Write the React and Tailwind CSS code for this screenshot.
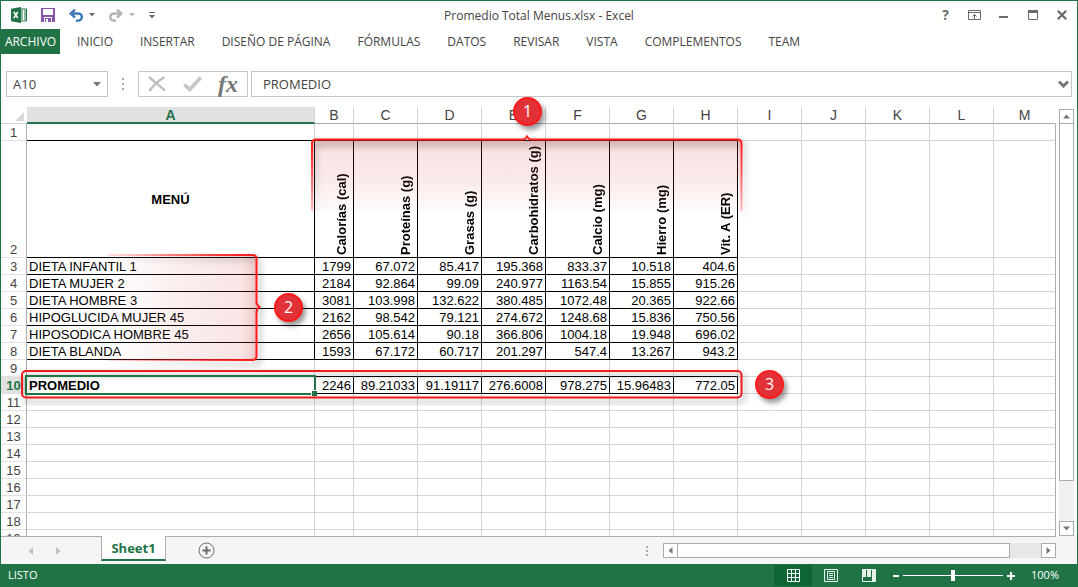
import { useState } from "react";
import clsx from "clsx";

const TABS = [
  "INICIO",
  "INSERTAR",
  "DISEÑO DE PÁGINA",
  "FÓRMULAS",
  "DATOS",
  "REVISAR",
  "VISTA",
  "COMPLEMENTOS",
  "TEAM",
];

const COLUMNS = ["A", "B", "C", "D", "E", "F", "G", "H", "I", "J", "K", "L", "M"];

const HEADINGS = [
  "Calorías (cal)",
  "Proteínas (g)",
  "Grasas (g)",
  "Carbohidratos (g)",
  "Calcio (mg)",
  "Hierro (mg)",
  "Vit. A (ER)",
];

const CELLS = {
  2: ["MENÚ", ...HEADINGS],
  3: ["DIETA INFANTIL 1", "1799", "67.072", "85.417", "195.368", "833.37", "10.518", "404.6"],
  4: ["DIETA MUJER 2", "2184", "92.864", "99.09", "240.977", "1163.54", "15.855", "915.26"],
  5: ["DIETA HOMBRE 3", "3081", "103.998", "132.622", "380.485", "1072.48", "20.365", "922.66"],
  6: ["HIPOGLUCIDA MUJER 45", "2162", "98.542", "79.121", "274.672", "1248.68", "15.836", "750.56"],
  7: ["HIPOSODICA HOMBRE 45", "2656", "105.614", "90.18", "366.806", "1004.18", "19.948", "696.02"],
  8: ["DIETA BLANDA", "1593", "67.172", "60.717", "201.297", "547.4", "13.267", "943.2"],
  10: ["PROMEDIO", "2246", "89.21033", "91.19117", "276.6008", "978.275", "15.96483", "772.05"],
};

const ROWS = Array.from({ length: 19 }, (_, i) => i + 1);

function Caret({ className }) {
  return (
    <svg width="6" height="4" viewBox="0 0 6 4" className={className} fill="currentColor">
      <path d="M0 0h6L3 3.5z" />
    </svg>
  );
}

function ExcelLogo() {
  return (
    <svg width="16" height="16" viewBox="0 0 16 16" className="shrink-0">
      <path d="M9 2h6.5v12H9z" fill="#fff" stroke="#217346" />
      <path d="M10 4h2M13 4h2M10 6h2M13 6h2M10 8h2M13 8h2M10 10h2M13 10h2M10 12h2M13 12h2" stroke="#217346" />
      <path d="M0 1.8L10 0v16L0 14.2z" fill="#217346" />
      <path d="M2.8 4.8l4 6.4M6.8 4.8l-4 6.4" stroke="#fff" strokeWidth="1.6" />
    </svg>
  );
}

function TitleBar() {
  return (
    <header className="grid h-7 grid-cols-[1fr_auto_1fr] items-center text-[#6a6a6a]">
      <div className="flex items-center gap-[14px] pl-[10px]">
        <ExcelLogo />
        <button aria-label="Guardar">
          <svg width="14" height="14" viewBox="0 0 14 14">
            <path d="M0 0h14v14H0z" fill="#8756ab" />
            <path d="M2 1h10v6H2zM3 9h8v5H3z" fill="#fff" />
            <path d="M4 10h6v4H4z" fill="#8756ab" />
            <path d="M5 11h2v3H5z" fill="#fff" />
          </svg>
        </button>
        <button aria-label="Deshacer" className="flex items-center gap-[6px]">
          <svg width="14" height="13" viewBox="0 0 14 13" fill="none" stroke="#3f78b5" strokeWidth="2.4">
            <path d="M1.5 4.5H8.500c3 0 4.300 1.500 4.300 3.500 0 2.500-2 3.800-5.800 3.800" />
            <path d="M6 0.500l-4.300 4 4.300 4" />
          </svg>
          <Caret />
        </button>
        <button aria-label="Rehacer" className="flex items-center gap-[6px] text-[#b8b8b8]">
          <svg width="14" height="13" viewBox="0 0 14 13" fill="none" stroke="#b4b4b4" strokeWidth="2.4">
            <path d="M12.500 4.500H5.500C2.500 4.500 1.200 6 1.200 8c0 2.500 2 3.800 5.800 3.800" />
            <path d="M8 0.500l4.300 4-4.300 4" />
          </svg>
          <Caret />
        </button>
        <button aria-label="Personalizar barra de acceso rápido">
          <svg width="6" height="7" viewBox="0 0 6 7" fill="#6a6a6a">
            <path d="M0 0h6v1H0zM0 3h6L3 6.500z" />
          </svg>
        </button>
      </div>
      <h1 className="pt-[2px] text-xs text-[#444]">Promedio Total Menus.xlsx - Excel</h1>
      <div className="flex justify-end pr-px [&>button]:flex [&>button]:h-7 [&>button]:w-[29px] [&>button]:items-center [&>button]:justify-center">
        <button aria-label="Ayuda" className="text-sm font-bold">
          ?
        </button>
        <button aria-label="Opciones de la cinta">
          <svg width="13" height="10" viewBox="0 0 13 10" fill="none" stroke="currentColor">
            <path d="M0.500 0.500h12v9H0.500zM1 2.500h11M6.500 9V4.500M4.500 6.500l2-2 2 2" />
          </svg>
        </button>
        <button aria-label="Minimizar">
          <svg width="9" height="10" viewBox="0 0 9 10" fill="currentColor">
            <path d="M0 6h9v2H0z" />
          </svg>
        </button>
        <button aria-label="Maximizar">
          <svg width="10" height="10" viewBox="0 0 10 10" fill="none" stroke="currentColor">
            <path d="M0.500 0.500h9v9h-9z" />
            <path d="M0 1.500h10" strokeWidth="3" />
          </svg>
        </button>
        <button aria-label="Cerrar">
          <svg width="10" height="10" viewBox="0 0 10 10" stroke="currentColor" strokeWidth="2.200">
            <path d="M0.800 0.800l8.400 8.400M9.200 0.800L0.800 9.200" />
          </svg>
        </button>
      </div>
    </header>
  );
}

function RibbonTabs() {
  return (
    <nav className="flex h-[25px] items-center gap-[27px] text-xs whitespace-nowrap text-[#444]">
      <button className="-mr-[10px] h-full w-[59px] shrink-0 bg-[#217346] text-center text-white">ARCHIVO</button>
      {TABS.map((tab) => (
        <button key={tab}>{tab}</button>
      ))}
    </nav>
  );
}

function FormulaBar({ value, onChange }) {
  return (
    <div className="mt-[17px] flex h-[26px] items-stretch pr-[5px] pl-[5px] text-[13px] text-[#444]">
      <div className="flex w-[102px] items-center border border-[#c6c6c6] pr-[6px]">
        <input aria-label="Cuadro de nombres" defaultValue="A10" className="w-full min-w-0 pt-[2px] pl-[6px] outline-none" />
        <svg width="8" height="5" viewBox="0 0 8 5" fill="#777" className="shrink-0">
          <path d="M0 0h8L4 4.500z" />
        </svg>
      </div>
      <div className="flex w-[30px] flex-col items-center justify-center gap-[3px]">
        <i className="size-[2px] bg-[#aaa]" />
        <i className="size-[2px] bg-[#aaa]" />
        <i className="size-[2px] bg-[#aaa]" />
      </div>
      <div className="flex w-[110px] items-center justify-between border border-[#c6c6c6] px-[9px]">
        <button aria-label="Cancelar">
          <svg width="18" height="16" viewBox="0 0 18 16" fill="none" stroke="#bdbdbd">
            <path d="M1 1c5 4 10 9 16 13.500" strokeWidth="2.400" />
            <path d="M16.500 1C11 4.500 5 9.500 1.500 15" strokeWidth="2.400" />
          </svg>
        </button>
        <button aria-label="Introducir">
          <svg width="19" height="16" viewBox="0 0 19 16" fill="none" stroke="#c6c6c6" strokeWidth="3.600">
            <path d="M1.200 8.500l5.600 5L17.800 1.500" />
          </svg>
        </button>
        <button
          aria-label="Insertar función"
          className="font-['Liberation_Serif',serif] text-2xl leading-6 font-bold text-[#777] italic"
        >
          fx
        </button>
      </div>
      <div className="ml-[3px] flex flex-1 items-center border border-[#c6c6c6] pr-[2px]">
        <input
          aria-label="Barra de fórmulas"
          value={value}
          onChange={(e) => onChange(e.target.value)}
          className="w-full min-w-0 pt-[2px] pl-[11px] outline-none"
        />
        <svg width="11" height="8" viewBox="0 0 11 8" fill="none" stroke="#777" strokeWidth="3" className="shrink-0">
          <path d="M1 1.500l4.500 4.500L10 1.500" />
        </svg>
      </div>
    </div>
  );
}

function Cell({ row, col, text }) {
  const inTable = col < 8;
  const boxed = inTable && ((row >= 2 && row <= 8) || row === 10);
  const ruled = inTable && (boxed || row === 1 || row === 9);
  const upright = row === 2 && col > 0;
  return (
    <td
      className={clsx(
        "border-r border-b text-[13px] leading-[14px] text-black",
        boxed ? "border-r-black" : col === 12 ? "border-r-[#ababab]" : "border-r-[#d4d4d4]",
        ruled ? "border-b-black" : "border-b-[#d4d4d4]",
        upright ? "p-0" : "px-[2px] pt-[2px] pb-0",
        row === 2 && "align-middle font-bold",
        row === 2 && col === 0 && "text-center",
        row !== 2 && col > 0 && "text-right",
        row === 10 && col === 0 && "font-bold",
      )}
    >
      {upright && text ? (
        <span className="flex h-[116px] items-center justify-end pr-[3px]">
          <span className="h-full rotate-180 pt-[2px] leading-4 [writing-mode:vertical-rl]">{text}</span>
        </span>
      ) : (
        text
      )}
    </td>
  );
}

function Grid({ value }) {
  return (
    <div className="h-full overflow-hidden">
      <table className="w-full min-w-[1055px] table-fixed border-separate border-spacing-0">
        <colgroup>
          <col className="w-[26px]" />
          <col className="w-[288px]" />
          <col className="w-[39px]" />
          {COLUMNS.slice(2, 12).map((c) => (
            <col key={c} className="w-[64px]" />
          ))}
          <col />
        </colgroup>
        <thead>
          <tr className="h-[17px] text-sm leading-[13px] text-[#444]">
            <th aria-label="Seleccionar todo" className="border-b border-[#d4d4d4] p-0">
              <svg width="9" height="9" viewBox="0 0 9 9" fill="#d9d9d9" className="mt-[3px] mr-[3px] ml-auto">
                <path d="M9 0v9H0z" />
              </svg>
            </th>
            {COLUMNS.map((c, i) => (
              <th
                key={c}
                scope="col"
                className={clsx(
                  "border-r px-0 pt-[2px] pb-0 align-top",
                  i === 12 ? "border-r-transparent" : "border-r-[#d4d4d4]",
                  i === 0
                    ? "border-b-2 border-b-[#217346] bg-[#e1e1e1] font-bold text-[#217346]"
                    : "border-b border-b-[#ababab] font-normal",
                )}
              >
                {c}
              </th>
            ))}
          </tr>
        </thead>
        <tbody>
          {ROWS.map((row) => (
            <tr key={row} className={row === 2 ? "h-[117px]" : "h-[17px]"}>
              <th
                scope="row"
                className={clsx(
                  "border-r border-b border-r-[#ababab] border-b-[#e1e1e1] px-0 pt-[2px] pb-0 text-[13px] leading-[14px]",
                  row === 2 && "align-bottom",
                  row === 10 ? "bg-[#e1e1e1] font-bold text-[#217346]" : "font-normal text-[#444]",
                )}
              >
                {row}
              </th>
              {COLUMNS.map((c, col) => (
                <Cell key={c} row={row} col={col} text={row === 10 && col === 0 ? value : CELLS[row]?.[col]} />
              ))}
            </tr>
          ))}
        </tbody>
      </table>
    </div>
  );
}

function Badge({ children, className }) {
  return (
    <span
      className={clsx(
        "absolute flex size-[29px] items-center justify-center rounded-full border-2 border-[#ff1a1a] bg-[#e23237] pb-px font-['Open_Sans',sans-serif] text-base text-white shadow-[3px_4px_5px_rgba(0,0,0,0.4)]",
        className,
      )}
    >
      {children}
    </span>
  );
}

function Annotations() {
  return (
    <div className="pointer-events-none absolute top-0 left-0">
      {/* selected cell */}
      <div className="absolute top-[268px] left-[24px] h-[20px] w-[291px] border-2 border-[#217346]" />
      <div className="absolute top-[283px] left-[310px] size-[6px] border-t border-l border-white bg-[#217346]" />

      <svg width="800" height="300" viewBox="1 107 800 300" className="block max-w-none overflow-visible" fill="none">
        <defs>
          <linearGradient id="down" gradientUnits="userSpaceOnUse" x1="0" y1="140" x2="0" y2="211">
            <stop offset="0" stopColor="#ff1a1a" />
            <stop offset="0.3" stopColor="#ff1a1a" stopOpacity="0.8" />
            <stop offset="1" stopColor="#ff1a1a" stopOpacity="0.25" />
          </linearGradient>
          <linearGradient id="downFill" gradientUnits="userSpaceOnUse" x1="0" y1="140" x2="0" y2="211">
            <stop offset="0" stopColor="#c03030" stopOpacity="0.26" />
            <stop offset="0.2" stopColor="#d04040" stopOpacity="0.14" />
            <stop offset="0.5" stopColor="#d04040" stopOpacity="0.12" />
            <stop offset="1" stopColor="#d04040" stopOpacity="0.02" />
          </linearGradient>
          <linearGradient id="left" gradientUnits="userSpaceOnUse" x1="107" y1="0" x2="257" y2="0">
            <stop offset="0" stopColor="#ff1a1a" stopOpacity="0.1" />
            <stop offset="0.7" stopColor="#ff1a1a" stopOpacity="0.8" />
            <stop offset="1" stopColor="#ff1a1a" />
          </linearGradient>
          <linearGradient id="leftFill" gradientUnits="userSpaceOnUse" x1="107" y1="0" x2="257" y2="0">
            <stop offset="0" stopColor="#d04040" stopOpacity="0" />
            <stop offset="0.5" stopColor="#d04040" stopOpacity="0.09" />
            <stop offset="0.9" stopColor="#d04040" stopOpacity="0.14" />
            <stop offset="1" stopColor="#c03030" stopOpacity="0.26" />
          </linearGradient>
          <filter id="shade" x="-10%" y="-30%" width="120%" height="160%">
            <feDropShadow dx="3" dy="4" stdDeviation="3" floodColor="#000" floodOpacity="0.4" />
          </filter>
        </defs>

        <path d="M312 211V143q0-4 4-4H738q4 0 4 4V211z" fill="url(#downFill)" />
        <path
          d="M312 211V143.500q0-4 4-4H523q2 0 4-3 2 3 4 3H737.500q4 0 4 4V211"
          stroke="url(#down)"
          strokeWidth="2"
          filter="url(#shade)"
        />

        <path d="M107 255H253q4 0 4 4V356q0 4-4 4H107z" fill="url(#leftFill)" />
        <path
          d="M107 255H252.500q4 0 4 4V302q0 3 3 5-3 2-3 5V356q0 4-4 4H107"
          stroke="url(#left)"
          strokeWidth="2"
          filter="url(#shade)"
        />

        <rect x="22" y="371" width="719.500" height="26.500" rx="4" stroke="#f01a1a" strokeWidth="2" filter="url(#shade)" />
      </svg>

      <Badge className="-top-[10px] left-[512px]">1</Badge>
      <Badge className="top-[186px] left-[273px]">2</Badge>
      <Badge className="top-[263px] left-[754px]">3</Badge>
    </div>
  );
}

function ScrollButton({ label, d }) {
  return (
    <button
      aria-label={label}
      className="flex size-[15px] shrink-0 items-center justify-center border border-[#ababab] bg-white"
    >
      <svg width="7" height="7" viewBox="0 0 7 7" fill="#777">
        <path d={d} />
      </svg>
    </button>
  );
}

function VerticalScroll() {
  return (
    <div className="flex w-[21px] shrink-0 flex-col pt-[2px] pl-[3px]">
      <ScrollButton label="Arriba" d="M3.500 1.500L7 5.500H0z" />
      <div className="-mt-px flex w-[15px] flex-1 flex-col bg-[#f1f1f1]">
        <div className="w-full grow-9 border border-[#ababab] bg-white" />
        <div className="grow" />
      </div>
      <ScrollButton label="Abajo" d="M0 1.500h7L3.500 5.500z" />
    </div>
  );
}

function SheetTabs() {
  return (
    <div className="flex h-7 shrink-0 bg-[#f5f5f5] pr-[21px]">
      <div className="flex w-[100px] items-center gap-[23px] border-t border-[#ababab] pl-[27px] text-[#c0c0c0]">
        <button aria-label="Hoja anterior">
          <svg width="5" height="8" viewBox="0 0 5 8" fill="currentColor">
            <path d="M5 0v8L0.500 4z" />
          </svg>
        </button>
        <button aria-label="Hoja siguiente">
          <svg width="5" height="8" viewBox="0 0 5 8" fill="currentColor">
            <path d="M0 0v8l4.500-4z" />
          </svg>
        </button>
      </div>
      <button className="mb-[3px] w-[65px] border-x border-b-2 border-x-[#ababab] border-b-[#217346] bg-white pt-[2px] text-[13px] font-bold text-[#217346]">
        Sheet1
      </button>
      <div className="flex flex-1 items-center border-t border-[#ababab]">
        <button aria-label="Hoja nueva" className="ml-8">
          <svg width="17" height="17" viewBox="0 0 17 17" fill="none" stroke="#6a6a6a">
            <circle cx="8.500" cy="8.500" r="7.500" />
            <path d="M4.500 8.500h8M8.500 4.500v8" strokeWidth="2" />
          </svg>
        </button>
      </div>
      <div className="flex w-[410px] items-center border-t border-[#ababab]">
        <div className="mr-[15px] flex flex-col gap-[2px]">
          <i className="size-[2px] bg-[#ababab]" />
          <i className="size-[2px] bg-[#ababab]" />
          <i className="size-[2px] bg-[#ababab]" />
        </div>
        <ScrollButton label="Izquierda" d="M5.500 0v7L1.500 3.500z" />
        <div className="-ml-px flex h-[15px] flex-1 bg-[#e8e8e8]">
          <div className="w-[333px] border border-[#ababab] bg-white" />
        </div>
        <ScrollButton label="Derecha" d="M1.500 0v7l4-3.500z" />
      </div>
    </div>
  );
}

function StatusBar() {
  const [zoom, setZoom] = useState(100);
  return (
    <footer className="flex h-[23px] shrink-0 items-center bg-[#217346] pr-[18px] pl-[7px] text-[11px] text-white">
      <span className="flex-1">LISTO</span>
      <div className="flex h-full items-center [&>button]:flex [&>button]:h-[21px] [&>button]:w-[38px] [&>button]:items-center [&>button]:justify-center">
        <button aria-label="Normal" className="bg-[#0d6634]">
          <svg width="13" height="13" viewBox="0 0 13 13" fill="none" stroke="#fff">
            <path d="M0.500 0.500h12v12H0.500zM4.500 0v13M8.500 0v13M0 4.500h13M0 8.500h13" />
          </svg>
        </button>
        <button aria-label="Diseño de página">
          <svg width="14" height="13" viewBox="0 0 14 13" fill="none" stroke="#e6f2ea">
            <path d="M0.500 0.500h13v12H0.500zM3.500 2.500h7v8h-7zM5 4.500h4M5 6.500h4M5 8.500h4" />
          </svg>
        </button>
        <button aria-label="Salto de página">
          <svg width="14" height="13" viewBox="0 0 14 13">
            <path d="M0.500 0.500h13v12H0.500z" fill="none" stroke="#e6f2ea" />
            <path d="M1 1h3v7H1zM5 1h4v7H5zM10 1h3v11h-3z" fill="#e6f2ea" />
          </svg>
        </button>
      </div>
      <button aria-label="Alejar" className="ml-[5px]">
        <svg width="6" height="8" viewBox="0 0 6 8" fill="#fff">
          <path d="M0 3h6v2H0z" />
        </svg>
      </button>
      <input
        type="range"
        aria-label="Zoom"
        min="0"
        max="200"
        value={zoom}
        onChange={(e) => setZoom(Number(e.target.value))}
        className="mx-1 h-[11px] w-[100px] appearance-none bg-[linear-gradient(#fff,#fff)] bg-[length:100%_1px] bg-center bg-no-repeat [&::-webkit-slider-thumb]:h-[11px] [&::-webkit-slider-thumb]:w-[4px] [&::-webkit-slider-thumb]:appearance-none [&::-webkit-slider-thumb]:bg-white"
      />
      <button aria-label="Acercar">
        <svg width="8" height="8" viewBox="0 0 8 8" fill="#fff">
          <path d="M0 3h8v2H0zM3 0h2v8H3z" />
        </svg>
      </button>
      <span className="ml-4 w-7 text-right">{zoom}%</span>
    </footer>
  );
}

export default function App() {
  const [value, setValue] = useState("PROMEDIO");
  return (
    <div className="flex h-screen flex-col overflow-hidden border-x border-t border-[#217346] bg-white font-['Open_Sans','Noto_Sans',sans-serif]">
      <TitleBar />
      <RibbonTabs />
      <FormulaBar value={value} onChange={setValue} />
      <main className="mt-[10px] flex min-h-0 flex-1">
        <div className="relative min-w-0 flex-1 font-['Liberation_Sans',Arial,sans-serif]">
          <Grid value={value} />
          <Annotations />
        </div>
        <VerticalScroll />
      </main>
      <SheetTabs />
      <StatusBar />
    </div>
  );
}
